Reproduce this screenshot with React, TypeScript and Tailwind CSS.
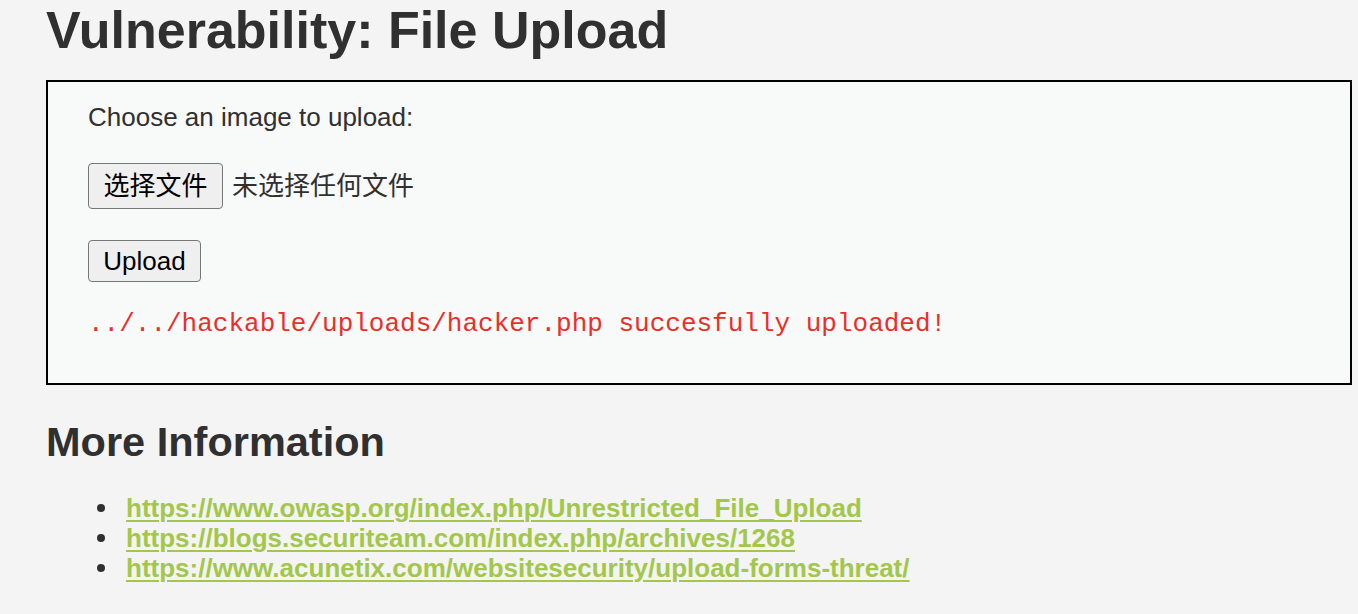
const links = [
  "https://www.owasp.org/index.php/Unrestricted_File_Upload",
  "https://blogs.securiteam.com/index.php/archives/1268",
  "https://www.acunetix.com/websitesecurity/upload-forms-threat/",
];

const sans = "font-['Liberation_Sans','Noto_Sans_CJK_SC',sans-serif]";

export default function App() {
  return (
    <div className={`min-h-screen bg-[#f4f4f4] pl-[46px] pr-[6px] text-[#303030] ${sans}`}>
      <h1 className="text-[52px] leading-[60px] font-bold">Vulnerability: File Upload</h1>

      <div className="mt-[20px] border-2 border-black bg-[#f8f9f9] pl-[40px] pt-[20px] pb-[44px]">
        <div className="text-[26px] leading-[30px]">Choose an image to upload:</div>

        <div className="mt-[31px] flex items-center gap-[9px]">
          <button className="flex h-[46px] w-[135px] items-center justify-center rounded-[4px] border border-[#767676] bg-[#efefef] text-[26px] text-black">
            选择文件
          </button>
          <span className="text-[26px] text-[#303030]">未选择任何文件</span>
        </div>

        <button className="mt-[31px] flex h-[42px] w-[113px] items-center justify-center rounded-[4px] border border-[#767676] bg-[#efefef] text-[26px] text-black">
          Upload
        </button>

        <pre className="mt-[27px] font-['Liberation_Mono',monospace] text-[26px] leading-[30px] text-[#e8302a]">
          ../../hackable/uploads/hacker.php succesfully uploaded!
        </pre>
      </div>

      <h2 className="mt-[33px] text-[41.5px] leading-[48px] font-bold">More Information</h2>

      <ul className="mt-[27px] pl-[51px] text-[26px] leading-[30px]">
        {links.map((href) => (
          <li key={href} className="flex items-center gap-[21px]">
            <span className="h-[8px] w-[8px] shrink-0 rounded-full bg-[#303030]" />
            <a href={href} className="font-bold text-[#a3c74b] underline decoration-2 underline-offset-[3px]">
              {href}
            </a>
          </li>
        ))}
      </ul>
    </div>
  );
}
